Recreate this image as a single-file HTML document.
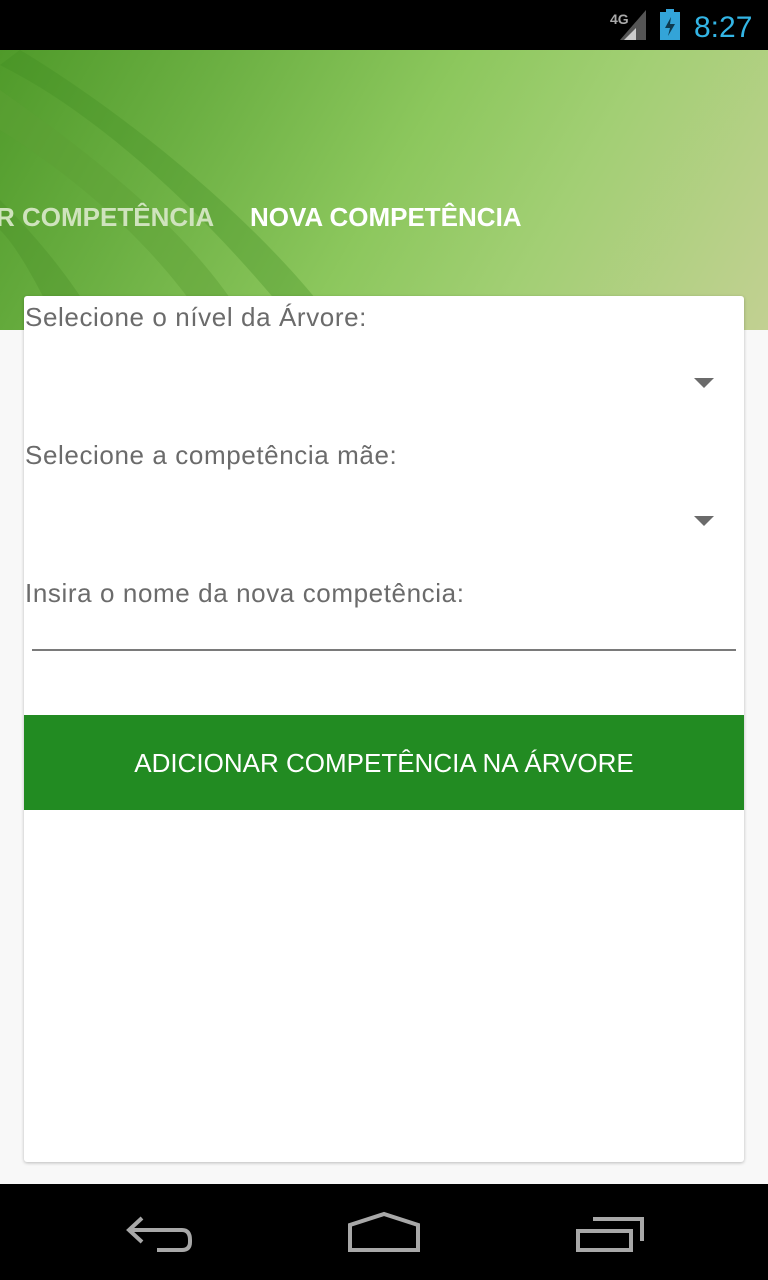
<!DOCTYPE html>
<html><head><meta charset="utf-8"><style>
*{margin:0;padding:0;box-sizing:border-box}
body{width:768px;height:1280px;background:#f8f8f8;font-family:"Liberation Sans",sans-serif;position:relative;overflow:hidden}
.sb{position:absolute;top:0;left:0;width:768px;height:50px;background:#000}
.hdr{position:absolute;top:50px;left:0;width:768px;height:280px;overflow:hidden;
background:linear-gradient(120deg,#4f9a2a 0%,#6cb043 25%,#8cc75d 50%,#a2cf74 70%,#c2d092 100%)}
.tab{position:absolute;top:152px;font-size:26px;font-weight:bold;white-space:nowrap}
.card{position:absolute;left:24px;top:296px;width:720px;height:866px;background:#fff;border-radius:3px;box-shadow:0 1px 3px rgba(0,0,0,.25)}
.lbl{position:absolute;left:1px;font-size:26px;letter-spacing:.6px;color:#6b6b6b;white-space:nowrap}
.arr{position:absolute;right:30px;width:0;height:0;border-left:10px solid transparent;border-right:10px solid transparent;border-top:10px solid #6b6b6b}
.btn{position:absolute;left:0;top:419px;width:720px;height:95px;background:#228b22;color:#fff;font-size:26px;text-align:center;line-height:97px}
.nav{position:absolute;top:1184px;left:0;width:768px;height:96px;background:#000}
</style></head><body>
<div class="sb">
<svg width="768" height="50" style="position:absolute;left:0;top:0">
<text x="610" y="24" font-size="14" font-weight="bold" fill="#aaa" font-family="Liberation Sans">4G</text>
<polygon points="620,40 646,10 646,40" fill="#555"/>
<polygon points="624,40 636,28 636,40" fill="#ccc"/>
<rect x="660" y="12" width="20" height="28" fill="#33a4d8"/><rect x="666" y="9" width="8" height="4" fill="#33a4d8"/>
<polygon points="671,17 665,28 670,28 668,36 675,24 670,24" fill="#0e3a4e"/>
<text x="694" y="37" font-size="30" fill="#33b5e5" font-family="Liberation Sans">8:27</text>
</svg></div>
<div class="hdr">
<svg width="768" height="280" style="position:absolute;left:0;top:0">
<path d="M20,0 C120,60 260,170 340,280 L300,280 C220,180 110,70 0,15Z" fill="#3f8a22" opacity=".3"/>
<path d="M0,40 C100,110 200,190 250,280 L210,280 C160,200 80,130 0,80Z" fill="#5da035" opacity=".45"/>
<path d="M0,150 C40,190 80,240 100,280 L60,280 C40,240 20,200 0,180Z" fill="#4a8f28" opacity=".35"/>
</svg>
<div class="tab" style="left:-4px;color:#cfe3bd">R COMPETÊNCIA</div>
<div class="tab" style="left:250px;color:#fff">NOVA COMPETÊNCIA</div>
</div>
<div class="card">
<div class="lbl" style="top:6px">Selecione o nível da Árvore:</div>
<div class="arr" style="top:82px"></div>
<div class="lbl" style="top:144px">Selecione a competência mãe:</div>
<div class="arr" style="top:220px"></div>
<div class="lbl" style="top:282px">Insira o nome da nova competência:</div>
<div style="position:absolute;left:8px;top:353px;width:704px;height:2px;background:#7a7a7a"></div>
<div class="btn">ADICIONAR COMPETÊNCIA NA ÁRVORE</div>
</div>
<div class="nav">
<svg width="768" height="96" style="position:absolute;left:0;top:0" fill="none" stroke="#a8a8a8" stroke-width="4">
<path d="M142,34 L129,46 L142,58 M129,46 L182,46 Q190,46 190,56 L190,58 Q190,66 182,66 L157,66"/>
<path d="M350,66 L350,41 L384,30 L418,41 L418,66Z"/>
<path d="M578,47 L631,47 L631,66 L578,66Z M593,35 L642,35 L642,57"/>
</svg></div>
</body></html>
